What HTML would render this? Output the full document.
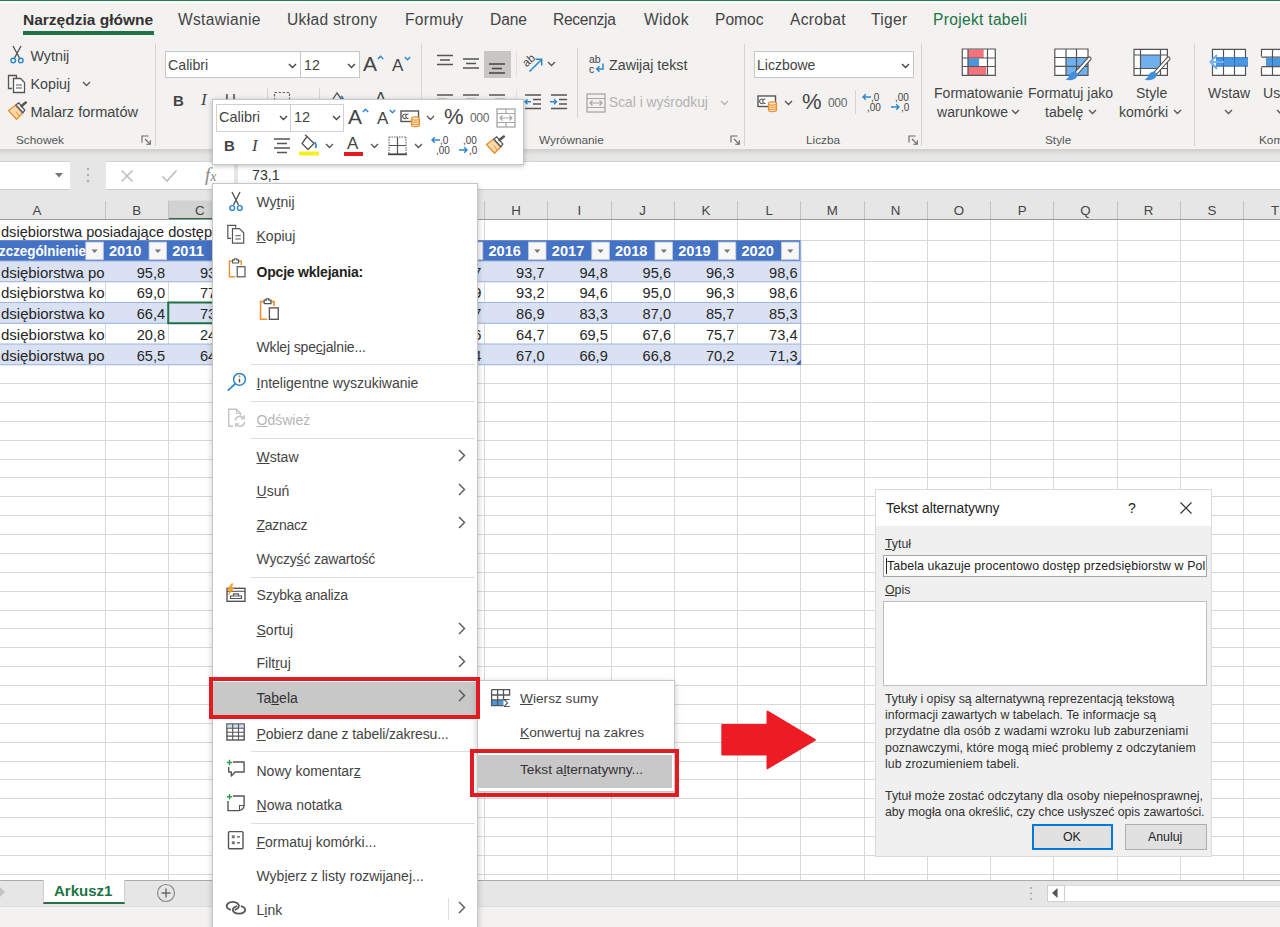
<!DOCTYPE html>
<html lang="pl">
<head>
<meta charset="utf-8">
<title>Excel – Tekst alternatywny tabeli</title>
<style>
*{box-sizing:border-box;margin:0;padding:0}
html,body{width:1280px;height:927px;overflow:hidden;background:#fff}
body{position:relative;font-family:"Liberation Sans",sans-serif;color:#444;font-size:14px}
.abs,.t{position:absolute}
.t{white-space:nowrap;line-height:1;color:#444}
svg{position:absolute;overflow:visible}
u{text-decoration:underline;text-underline-offset:1px}
/* ribbon */
#ribbon{position:absolute;left:0;top:0;width:1280px;height:149px;background:#f3f2f1}
#topline{position:absolute;left:0;top:0;width:1280px;height:4px;background:linear-gradient(#2b7a55 0,#2b7a55 1px,#f6fbf8 1px,#f8fbf9 3px,#f3f2f1 4px)}
.tab{font-size:15.6px;top:11.500px;color:#444}
.gsep{position:absolute;top:44px;width:1px;height:102px;background:#d6d4d2}
.glabel{font-size:11.800px;top:134.500px;color:#555}
.rt{font-size:14.6px}
.box{position:absolute;background:#fff;border:1px solid #c9c7c5}
.dl{font-size:12.350px;color:#333}
.dp{line-height:16.200px;white-space:nowrap;color:#333}
</style>
</head>
<body>
<div id="ribbon">
<div id="topline"></div>
<!-- tabs -->
<span class="t tab" style="left:23px;font-weight:bold;color:#333;font-size:15.5px;letter-spacing:0px">Narzędzia główne</span>
<div class="abs" style="left:23px;top:31px;width:131px;height:4px;background:#217346"></div>
<span class="t tab" style="left:178px;letter-spacing:.3px">Wstawianie</span>
<span class="t tab" style="left:287px;letter-spacing:.3px">Układ strony</span>
<span class="t tab" style="left:405px;letter-spacing:.3px">Formuły</span>
<span class="t tab" style="left:490px;letter-spacing:-.1px">Dane</span>
<span class="t tab" style="left:553px;letter-spacing:-.3px">Recenzja</span>
<span class="t tab" style="left:644px;letter-spacing:.3px">Widok</span>
<span class="t tab" style="left:715px;letter-spacing:0px">Pomoc</span>
<span class="t tab" style="left:790px;letter-spacing:.3px">Acrobat</span>
<span class="t tab" style="left:871px;letter-spacing:.3px">Tiger</span>
<span class="t tab" style="left:933px;color:#217346;letter-spacing:.3px">Projekt tabeli</span>

<!-- Schowek -->
<svg style="left:9px;top:45px" width="16" height="20" viewBox="0 0 16 20"><path d="M4 1 L10.5 13 M12 1 L5.500 13" stroke="#555" stroke-width="1.4" fill="none"/><circle cx="4.2" cy="15.500" r="2.300" fill="none" stroke="#2e86c9" stroke-width="1.4"/><circle cx="11.800" cy="15.500" r="2.300" fill="none" stroke="#2e86c9" stroke-width="1.4"/></svg>
<span class="t rt" style="left:30.500px;top:48.500px;font-size:14.300px">Wytnij</span>
<svg style="left:7px;top:74px" width="20" height="20" viewBox="0 0 20 20"><path d="M5 14.500 H1.500 V1.500 H9.500 V4" stroke="#555" stroke-width="1.300" fill="none"/><path d="M6.500 4.500 H13.500 L17.500 8.500 V18.500 H6.500 Z" fill="#fff" stroke="#555" stroke-width="1.300"/><path d="M9 11 H15 M9 14 H15" stroke="#555" stroke-width="1.100"/></svg>
<span class="t rt" style="left:30.500px;top:76.500px;font-size:14.300px">Kopiuj</span>
<svg style="left:82px;top:81px" width="9" height="6" viewBox="0 0 9 6"><path d="M1 1 L4.500 4.500 L8 1" stroke="#555" stroke-width="1.300" fill="none"/></svg>
<svg style="left:7px;top:101px" width="21" height="20" viewBox="0 0 20 20"><path d="M1 9.500 L8 4.200 L15.200 12 L9 18.200 Z" fill="#fbd9b0" stroke="#e8912d" stroke-width="1.400" stroke-linejoin="round"/><path d="M5 13.500 L9 17.500 M8.500 10.500 L11.500 15" stroke="#e8912d" stroke-width="1"/><path d="M8.300 4 L11.300 1.800 L17.300 9.200 L15.300 11.800 Z" fill="#f3f2f1" stroke="#555" stroke-width="1.300" stroke-linejoin="round"/><path d="M14 5 L18.300 1.600" stroke="#555" stroke-width="2.600" stroke-linecap="round"/></svg>
<span class="t rt" style="left:30.500px;top:104.500px;font-size:14.550px">Malarz formatów</span>
<span class="t glabel" style="left:16px">Schowek</span>
<svg style="left:141px;top:135px" width="10" height="10" viewBox="0 0 10 10"><path d="M1 7.500 V1 H7.500 M4 4 L9.300 9.300 M9.300 5.300 V9.300 H5.300" stroke="#666" stroke-width="1.100" fill="none"/></svg>
<div class="gsep" style="left:155px"></div>

<!-- Czcionka -->
<div class="box" style="left:165px;top:51px;width:136px;height:27px"></div>
<span class="t" style="left:168px;top:58px;font-size:14.200px">Calibri</span>
<svg style="left:288px;top:63px" width="9" height="6" viewBox="0 0 9 6"><path d="M1 1 L4.500 4.500 L8 1" stroke="#444" stroke-width="1.400" fill="none"/></svg>
<div class="box" style="left:300px;top:51px;width:60px;height:27px"></div>
<span class="t" style="left:304px;top:58px;font-size:14.200px">12</span>
<svg style="left:347px;top:63px" width="9" height="6" viewBox="0 0 9 6"><path d="M1 1 L4.500 4.500 L8 1" stroke="#444" stroke-width="1.400" fill="none"/></svg>
<span class="t" style="left:363px;top:53px;font-size:21px">A</span>
<svg style="left:377px;top:55px" width="7" height="5" viewBox="0 0 7 5"><path d="M.8 4 L3.500 1.200 L6.200 4" stroke="#2e86c9" stroke-width="1.400" fill="none"/></svg>
<span class="t" style="left:392px;top:57px;font-size:17px">A</span>
<svg style="left:404px;top:56px" width="7" height="5" viewBox="0 0 7 5"><path d="M.8 1 L3.500 3.800 L6.200 1" stroke="#2e86c9" stroke-width="1.400" fill="none"/></svg>
<span class="t" style="left:173px;top:93px;font-size:15px;font-weight:bold">B</span>
<span class="t" style="left:201px;top:91px;font-size:17px;font-style:italic;font-family:'Liberation Serif',serif">I</span>
<span class="t" style="left:225px;top:91px;font-size:15px"><u>U</u></span>
<div class="abs" style="left:267px;top:88px;width:1px;height:22px;background:#d6d4d2"></div>
<svg style="left:273px;top:91px" width="18" height="18" viewBox="0 0 18 18"><rect x="1.500" y="1.500" width="15" height="15" fill="none" stroke="#666" stroke-width="1.200" stroke-dasharray="2.500 1.500"/></svg>
<div class="abs" style="left:319px;top:88px;width:1px;height:22px;background:#d6d4d2"></div>
<svg style="left:328px;top:90px" width="18" height="18" viewBox="0 0 18 18"><path d="M3 12 L9 3 L14 10 Z" fill="none" stroke="#555" stroke-width="1.300"/><path d="M13 6 q3 2 2 6" stroke="#2e86c9" stroke-width="1.600" fill="none"/></svg>
<span class="t" style="left:375px;top:90px;font-size:17px">A</span>
<div class="gsep" style="left:421px"></div>
<!-- Wyrownanie -->
<svg style="left:436px;top:53px" width="18" height="18" viewBox="0 0 18 18"><path d="M1 2.500 H17 M4 7 H14 M1 11.500 H17" stroke="#555" stroke-width="1.400"/></svg>
<svg style="left:462px;top:55px" width="18" height="18" viewBox="0 0 18 18"><path d="M1 4 H17 M4 8.500 H14 M1 13 H17" stroke="#555" stroke-width="1.400"/></svg>
<div class="abs" style="left:484px;top:51px;width:27px;height:27px;background:#c8c6c4"></div>
<svg style="left:488px;top:58px" width="18" height="18" viewBox="0 0 18 18"><path d="M1 6 H17 M4 10.500 H14 M1 15 H17" stroke="#444" stroke-width="1.400"/></svg>
<svg style="left:520px;top:50px" width="26" height="26" viewBox="520 50 26 26"><text x="0" y="0" font-size="11.500" fill="#444" transform="translate(526.500 67.500) rotate(-42)" font-family="Liberation Sans, sans-serif">ab</text><path d="M529.500 71.500 L541.300 59.700 M535.500 59.300 H541.700 V65.500" stroke="#2e86c9" stroke-width="1.500" fill="none"/></svg>
<svg style="left:546.500px;top:61px" width="9" height="6" viewBox="0 0 9 6"><path d="M1 1 L4.500 4.500 L8 1" stroke="#555" stroke-width="1.300" fill="none"/></svg>
<svg style="left:436px;top:93px" width="18" height="18" viewBox="0 0 18 18"><path d="M1 2 H17 M1 6.500 H11 M1 11 H17 M1 15.500 H11" stroke="#555" stroke-width="1.400"/></svg>
<svg style="left:462px;top:93px" width="18" height="18" viewBox="0 0 18 18"><path d="M1 2 H17 M4 6.500 H14 M1 11 H17 M4 15.500 H14" stroke="#555" stroke-width="1.400"/></svg>
<svg style="left:488px;top:93px" width="18" height="18" viewBox="0 0 18 18"><path d="M1 2 H17 M7 6.500 H17 M1 11 H17 M7 15.500 H17" stroke="#555" stroke-width="1.400"/></svg>
<svg style="left:524px;top:93px" width="18" height="18" viewBox="0 0 18 18"><path d="M1 2 H17 M9 6.500 H17 M9 11 H17 M1 15.500 H17" stroke="#555" stroke-width="1.400"/><path d="M7 8.800 H1 M3.500 6.300 L1 8.800 L3.500 11.300" stroke="#2e86c9" stroke-width="1.400" fill="none"/></svg>
<svg style="left:550px;top:93px" width="18" height="18" viewBox="0 0 18 18"><path d="M1 2 H17 M9 6.500 H17 M9 11 H17 M1 15.500 H17" stroke="#555" stroke-width="1.400"/><path d="M0 8.800 H6.500 M4 6.300 L6.500 8.800 L4 11.300" stroke="#2e86c9" stroke-width="1.400" fill="none"/></svg>
<div class="abs" style="left:516px;top:52px;width:1px;height:25px;background:#e3e1df"></div>
<div class="abs" style="left:516px;top:90px;width:1px;height:25px;background:#e3e1df"></div>
<div class="abs" style="left:577px;top:48px;width:1px;height:70px;background:#d6d4d2"></div>
<svg style="left:588px;top:54px" width="20" height="22" viewBox="0 0 20 22"><text x="1" y="9" font-size="10.500" fill="#444" font-family="Liberation Sans, sans-serif">ab</text><text x="1" y="19" font-size="10.500" fill="#444" font-family="Liberation Sans, sans-serif">c</text><path d="M15 9.500 V15 H9 M11.500 12.300 L8.800 15 L11.500 17.700" stroke="#2e86c9" stroke-width="1.500" fill="none"/></svg>
<span class="t rt" style="left:609px;top:58px;font-size:14.250px">Zawijaj tekst</span>
<svg style="left:586px;top:93px" width="20" height="20" viewBox="0 0 20 20"><rect x="1" y="1" width="18" height="18" fill="none" stroke="#a8a6a4" stroke-width="1.300"/><path d="M1 5.500 H19 M1 14.500 H19 M4 10 H16 M6.500 7.500 L4 10 L6.500 12.500 M13.500 7.500 L16 10 L13.500 12.500" stroke="#a8a6a4" stroke-width="1.200" fill="none"/></svg>
<span class="t rt" style="left:609px;top:96px;color:#b3b1af;font-size:13.800px">Scal i wyśrodkuj</span>
<svg style="left:720px;top:100px" width="9" height="6" viewBox="0 0 9 6"><path d="M1 1 L4.500 4.500 L8 1" stroke="#b3b1af" stroke-width="1.300" fill="none"/></svg>
<span class="t glabel" style="left:539px">Wyrównanie</span>
<svg style="left:730px;top:135px" width="10" height="10" viewBox="0 0 10 10"><path d="M1 7.500 V1 H7.500 M4 4 L9.300 9.300 M9.300 5.300 V9.300 H5.300" stroke="#666" stroke-width="1.100" fill="none"/></svg>
<div class="gsep" style="left:744px"></div>

<!-- Liczba -->
<div class="box" style="left:754px;top:51px;width:160px;height:27px"></div>
<span class="t" style="left:757px;top:58px;font-size:14px">Liczbowe</span>
<svg style="left:901px;top:63px" width="9" height="6" viewBox="0 0 9 6"><path d="M1 1 L4.500 4.500 L8 1" stroke="#444" stroke-width="1.400" fill="none"/></svg>
<svg style="left:757px;top:93px" width="22" height="20" viewBox="0 0 22 20"><rect x="1" y="3" width="17.500" height="10.500" fill="#fff" stroke="#555" stroke-width="1.400"/><path d="M8.500 6 a2.300 2.300 0 1 0 0 4.500 M5.800 6.200 a2.300 2.300 0 1 0 0 4.200" fill="none" stroke="#555" stroke-width="1.100"/><path d="M11.500 10.500 v6.500 a4 1.600 0 0 0 8 0 v-6.500" fill="#fde9cf" stroke="#e8912d" stroke-width="1.200"/><ellipse cx="15.500" cy="10.500" rx="4" ry="1.600" fill="#fde9cf" stroke="#e8912d" stroke-width="1.200"/><path d="M11.500 12.700 a4 1.600 0 0 0 8 0 M11.500 14.900 a4 1.600 0 0 0 8 0" fill="none" stroke="#e8912d" stroke-width="1.100"/></svg>
<svg style="left:784px;top:100px" width="9" height="6" viewBox="0 0 9 6"><path d="M1 1 L4.500 4.500 L8 1" stroke="#555" stroke-width="1.300" fill="none"/></svg>
<span class="t" style="left:802px;top:91px;font-size:22px">%</span>
<span class="t" style="left:828px;top:97px;font-size:12px;letter-spacing:-.3px;color:#666">000</span>
<div class="abs" style="left:855px;top:90px;width:1px;height:24px;background:#d6d4d2"></div>
<svg style="left:861px;top:92px" width="24" height="22" viewBox="0 0 24 22"><text x="10" y="9" font-size="10" fill="#444" font-family="Liberation Sans, sans-serif">,0</text><text x="6" y="19" font-size="10" fill="#444" font-family="Liberation Sans, sans-serif">,00</text><path d="M10 5 H2 M4.800 2.200 L2 5 L4.800 7.800" stroke="#2e86c9" stroke-width="1.400" fill="none"/></svg>
<svg style="left:889px;top:92px" width="24" height="22" viewBox="0 0 24 22"><text x="6" y="9" font-size="10" fill="#444" font-family="Liberation Sans, sans-serif">,00</text><text x="12" y="19" font-size="10" fill="#444" font-family="Liberation Sans, sans-serif">,0</text><path d="M2 15 H10 M7.200 12.200 L10 15 L7.200 17.800" stroke="#2e86c9" stroke-width="1.400" fill="none"/></svg>
<span class="t glabel" style="left:806px">Liczba</span>
<svg style="left:908px;top:135px" width="10" height="10" viewBox="0 0 10 10"><path d="M1 7.500 V1 H7.500 M4 4 L9.300 9.300 M9.300 5.300 V9.300 H5.300" stroke="#666" stroke-width="1.100" fill="none"/></svg>
<div class="gsep" style="left:921px"></div>

<!-- Style -->
<svg style="left:960px;top:46px" width="40" height="34" viewBox="960 46 40 34"><rect x="962.300" y="49" width="33" height="26.300" fill="#fff"/><rect x="968" y="49.500" width="15.700" height="8.500" fill="#f4727c"/><rect x="968" y="58.500" width="11" height="8" fill="#4a97e0"/><rect x="968" y="66.500" width="18.200" height="8.500" fill="#f4727c"/><path d="M962.300 49 H995.300 V75.300 H962.300 Z M962.300 58 H995.300 M962.300 66.500 H995.300 M968 49 V75.300 M987.500 49 V75.300" fill="none" stroke="#555" stroke-width="1.200"/></svg>
<span class="t rt" style="left:934px;top:86px;font-size:14.050px">Formatowanie</span>
<span class="t rt" style="left:937px;top:105px;font-size:14.050px">warunkowe</span>
<svg style="left:1011px;top:109px" width="9" height="6" viewBox="0 0 9 6"><path d="M1 1 L4.500 4.500 L8 1" stroke="#555" stroke-width="1.300" fill="none"/></svg>
<svg style="left:1052px;top:46px" width="42" height="38" viewBox="1052 46 42 38"><rect x="1054.800" y="49" width="33.200" height="26.300" fill="#fff"/><rect x="1066" y="57.500" width="22" height="18.500" fill="#6fb0ee"/><path d="M1054.800 49 H1088 V75.300 H1054.800 Z M1054.800 57.500 H1088 M1054.800 66.300 H1088 M1066 49 V75.300 M1076.500 49 V75.300" fill="none" stroke="#555" stroke-width="1.200"/><path d="M1089.500 58.500 L1076 73.500" stroke="#555" stroke-width="4.200" stroke-linecap="round"/><path d="M1089.500 58.500 L1076.500 73" stroke="#fff" stroke-width="2" stroke-linecap="round"/><path d="M1075 71.500 q-4.500 .5 -5.500 4 q-.8 2.500 -4 4 q6 2 10 -1 q3 -2.500 2.500 -5 z" fill="#3f8fdc"/></svg>
<span class="t rt" style="left:1028px;top:86px;font-size:14.050px">Formatuj jako</span>
<span class="t rt" style="left:1045px;top:105px;font-size:14.050px">tabelę</span>
<svg style="left:1088px;top:109px" width="9" height="6" viewBox="0 0 9 6"><path d="M1 1 L4.500 4.500 L8 1" stroke="#555" stroke-width="1.300" fill="none"/></svg>
<svg style="left:1131px;top:46px" width="42" height="38" viewBox="1131 46 42 38"><rect x="1134" y="49.300" width="33.400" height="26" fill="#fff"/><rect x="1140.500" y="55" width="20" height="13.500" fill="#6fb0ee"/><path d="M1134 49.300 H1167.400 V75.300 H1134 Z M1134 55 H1167.400 M1134 68.500 H1167.400 M1140.500 49.300 V75.300 M1160.500 49.300 V75.300" fill="none" stroke="#555" stroke-width="1.200"/><path d="M1168.500 58.500 L1155 73.500" stroke="#555" stroke-width="4.200" stroke-linecap="round"/><path d="M1168.500 58.500 L1155.500 73" stroke="#fff" stroke-width="2" stroke-linecap="round"/><path d="M1154 71.500 q-4.500 .5 -5.500 4 q-.8 2.500 -4 4 q6 2 10 -1 q3 -2.500 2.500 -5 z" fill="#3f8fdc"/></svg>
<span class="t rt" style="left:1136px;top:86px;font-size:14.050px">Style</span>
<span class="t rt" style="left:1119px;top:105px;font-size:14.050px">komórki</span>
<svg style="left:1173px;top:109px" width="9" height="6" viewBox="0 0 9 6"><path d="M1 1 L4.500 4.500 L8 1" stroke="#555" stroke-width="1.300" fill="none"/></svg>
<span class="t glabel" style="left:1045px">Style</span>
<div class="gsep" style="left:1194px"></div>

<!-- Komorki -->
<svg style="left:1206px;top:46px" width="46" height="34" viewBox="1206 46 46 34"><rect x="1212.500" y="49.300" width="33" height="26" fill="#fff"/><path d="M1212.500 49.300 H1245.500 V75.300 H1212.500 Z M1223.500 49.300 V75.300 M1234.500 49.300 V75.300" fill="none" stroke="#555" stroke-width="1.200"/><rect x="1216" y="58" width="32" height="8" fill="#4a97e0"/><path d="M1212.500 57.700 H1248 M1212.500 66.200 H1248" stroke="#2a6fb5" stroke-width="1"/><path d="M1223.500 58 V66 M1234.500 58 V66" stroke="#2a6fb5" stroke-width="1"/><path d="M1224 62 H1211 M1217 55 L1210.500 62 L1217 69" stroke="#6fb0ee" stroke-width="2" fill="none"/></svg>
<span class="t rt" style="left:1208px;top:86px;font-size:14.050px">Wstaw</span>
<svg style="left:1224px;top:109px" width="9" height="6" viewBox="0 0 9 6"><path d="M1 1 L4.500 4.500 L8 1" stroke="#555" stroke-width="1.300" fill="none"/></svg>
<svg style="left:1258px;top:46px" width="30" height="34" viewBox="1258 46 30 34"><rect x="1261.500" y="49.300" width="33" height="26" fill="#fff"/><path d="M1261.500 49.300 H1294.500 V75.300 H1261.500 Z M1272.500 49.300 V75.300" fill="none" stroke="#555" stroke-width="1.200"/><rect x="1258" y="56.500" width="8" height="11" fill="#f3f2f1"/><rect x="1266" y="58" width="20" height="8" fill="#4a97e0"/><path d="M1261.500 57.200 H1290 M1261.500 66.700 H1290" stroke="#555" stroke-width="1.200"/><path d="M1272.500 58 V66" stroke="#2a6fb5" stroke-width="1"/></svg>
<span class="t rt" style="left:1263px;top:86px;font-size:14.050px">Usuń</span>
<svg style="left:1276px;top:109px" width="9" height="6" viewBox="0 0 9 6"><path d="M1 1 L4.500 4.500 L8 1" stroke="#555" stroke-width="1.300" fill="none"/></svg>
<span class="t glabel" style="left:1259px">Komórki</span>
</div>
<!-- formula bar area -->
<div class="abs" style="left:0;top:149px;width:1280px;height:71px;background:#e6e6e6"></div>
<div class="abs" style="left:0;top:149px;width:1280px;height:6px;background:linear-gradient(#d0cfce,#e6e6e6)"></div>
<div class="abs" style="left:0;top:161px;width:70px;height:29px;background:#fff;border-top:1px solid #d4d4d4;border-bottom:1px solid #cacaca"></div>
<svg style="left:55px;top:173px" width="9" height="5" viewBox="0 0 9 5"><path d="M0 0 H8 L4 4.500 Z" fill="#777"/></svg>
<svg style="left:86px;top:167px" width="4" height="16" viewBox="0 0 4 16"><circle cx="2" cy="2" r="1.200" fill="#aaa"/><circle cx="2" cy="8" r="1.200" fill="#aaa"/><circle cx="2" cy="14" r="1.200" fill="#aaa"/></svg>
<div class="abs" style="left:106px;top:161px;width:128px;height:29px;background:#fff;border-top:1px solid #d4d4d4;border-bottom:1px solid #cacaca"></div>
<div class="abs" style="left:238px;top:161px;width:1042px;height:29px;background:#fff;border-top:1px solid #d4d4d4;border-bottom:1px solid #cacaca"></div>
<svg style="left:120px;top:169px" width="14" height="14" viewBox="0 0 14 14"><path d="M1.500 1.500 L12.500 12.500 M12.500 1.500 L1.500 12.500" stroke="#bdbdbd" stroke-width="1.500"/></svg>
<svg style="left:161px;top:169px" width="17" height="14" viewBox="0 0 17 14"><path d="M1.500 7.500 L6 12 L15.500 1.500" stroke="#bdbdbd" stroke-width="1.600" fill="none"/></svg>
<span class="t" style="left:205px;top:165px;font-size:19px;font-style:italic;font-family:'Liberation Serif',serif;color:#888">f<span style="font-size:14px">x</span></span>
<span class="t" style="left:252px;top:168px;font-size:14.200px;color:#333">73,1</span>
<!-- grid -->
<svg style="left:0;top:196px" width="1280" height="686" viewBox="0 196 1280 686" font-family="Liberation Sans, sans-serif">
<rect x="168.25" y="200.5" width="63.25" height="19" fill="#d2d2d2"/>
<rect x="168.25" y="218" width="63.25" height="2" fill="#217346"/>
<path d="M105.50 201 V219.500 M168.50 201 V219.500 M231.50 201 V219.500 M294.50 201 V219.500 M358.50 201 V219.500 M421.50 201 V219.500 M484.50 201 V219.500 M547.50 201 V219.500 M611.50 201 V219.500 M674.50 201 V219.500 M737.50 201 V219.500 M800.50 201 V219.500 M864.50 201 V219.500 M927.50 201 V219.500 M990.50 201 V219.500 M1053.50 201 V219.500 M1117.50 201 V219.500 M1180.50 201 V219.500 M1243.50 201 V219.500 M1306.50 201 V219.500" stroke="#c2c2c2" stroke-width="1" fill="none"/>
<path d="M0 219.500 H1280" stroke="#999" stroke-width="1"/>
<path d="M105.50 240.25 V880 M168.50 240.25 V880 M231.50 240.25 V880 M294.50 220.00 V880 M358.50 220.00 V880 M421.50 220.00 V880 M484.50 220.00 V880 M547.50 220.00 V880 M611.50 220.00 V880 M674.50 220.00 V880 M737.50 220.00 V880 M800.50 220.00 V880 M864.50 220.00 V880 M927.50 220.00 V880 M990.50 220.00 V880 M1053.50 220.00 V880 M1117.50 220.00 V880 M1180.50 220.00 V880 M1243.50 220.00 V880 M1306.50 220.00 V880 M0 240.50 H1280 M0 261.50 H1280 M0 281.50 H1280 M0 302.50 H1280 M0 323.50 H1280 M0 344.50 H1280 M0 364.50 H1280 M0 383.50 H1280 M0 402.50 H1280 M0 421.50 H1280 M0 440.50 H1280 M0 459.50 H1280 M0 477.50 H1280 M0 496.50 H1280 M0 515.50 H1280 M0 534.50 H1280 M0 553.50 H1280 M0 572.50 H1280 M0 591.50 H1280 M0 610.50 H1280 M0 628.50 H1280 M0 647.50 H1280 M0 666.50 H1280 M0 685.50 H1280 M0 704.50 H1280 M0 723.50 H1280 M0 742.50 H1280 M0 761.50 H1280 M0 779.50 H1280 M0 798.50 H1280 M0 817.50 H1280 M0 836.50 H1280 M0 855.50 H1280 M0 874.50 H1280" stroke="#d8d8d8" stroke-width="1" fill="none"/>
<rect x="0" y="240.25" width="800.75" height="20.75" fill="#4472c4"/>
<rect x="0" y="261.50" width="800.75" height="20.25" fill="#d9e1f2"/>
<rect x="0" y="303.00" width="800.75" height="20.25" fill="#d9e1f2"/>
<rect x="0" y="344.50" width="800.75" height="20.25" fill="#d9e1f2"/>
<path d="M0 261.00 H800.75 M0 281.75 H800.75 M0 302.50 H800.75 M0 323.25 H800.75 M0 344.00 H800.75 M0 364.75 H800.75 M800.75 240.25 V364.75" stroke="#9db5e0" stroke-width="1" fill="none"/>
<text x="37.0" y="215.400" font-size="13.300" fill="#444" text-anchor="middle">A</text>
<text x="136.6" y="215.400" font-size="13.300" fill="#444" text-anchor="middle">B</text>
<text x="199.9" y="215.400" font-size="13.300" fill="#444" text-anchor="middle">C</text>
<text x="263.1" y="215.400" font-size="13.300" fill="#444" text-anchor="middle">D</text>
<text x="326.4" y="215.400" font-size="13.300" fill="#444" text-anchor="middle">E</text>
<text x="389.6" y="215.400" font-size="13.300" fill="#444" text-anchor="middle">F</text>
<text x="452.9" y="215.400" font-size="13.300" fill="#444" text-anchor="middle">G</text>
<text x="516.1" y="215.400" font-size="13.300" fill="#444" text-anchor="middle">H</text>
<text x="579.4" y="215.400" font-size="13.300" fill="#444" text-anchor="middle">I</text>
<text x="642.6" y="215.400" font-size="13.300" fill="#444" text-anchor="middle">J</text>
<text x="705.9" y="215.400" font-size="13.300" fill="#444" text-anchor="middle">K</text>
<text x="769.1" y="215.400" font-size="13.300" fill="#444" text-anchor="middle">L</text>
<text x="832.4" y="215.400" font-size="13.300" fill="#444" text-anchor="middle">M</text>
<text x="895.6" y="215.400" font-size="13.300" fill="#444" text-anchor="middle">N</text>
<text x="958.9" y="215.400" font-size="13.300" fill="#444" text-anchor="middle">O</text>
<text x="1022.1" y="215.400" font-size="13.300" fill="#444" text-anchor="middle">P</text>
<text x="1085.4" y="215.400" font-size="13.300" fill="#444" text-anchor="middle">Q</text>
<text x="1148.6" y="215.400" font-size="13.300" fill="#444" text-anchor="middle">R</text>
<text x="1211.9" y="215.400" font-size="13.300" fill="#444" text-anchor="middle">S</text>
<text x="1275.1" y="215.400" font-size="13.300" fill="#444" text-anchor="middle">T</text>
<text x="1" y="236.5" font-size="14.600" fill="#262626" textLength="211" lengthAdjust="spacingAndGlyphs">dsiębiorstwa posiadające dostęp</text>
<text x="-1" y="256.2" font-size="14.600" font-weight="bold" fill="#fff" textLength="87" lengthAdjust="spacingAndGlyphs">zczególnienie</text>
<rect x="85.8" y="242.1" width="17.500" height="17.500" fill="#f7f7f7" stroke="#c5cede" stroke-width=".8"/><path d="M91.5 249.4 h6.200 l-3.100 3.600 z" fill="#777"/>
<text x="109.0" y="256.2" font-size="14.600" font-weight="bold" fill="#fff">2010</text>
<rect x="149.1" y="242.1" width="17.500" height="17.500" fill="#f7f7f7" stroke="#c5cede" stroke-width=".8"/><path d="M154.8 249.4 h6.200 l-3.100 3.600 z" fill="#777"/>
<text x="172.2" y="256.2" font-size="14.600" font-weight="bold" fill="#fff">2011</text>
<rect x="212.3" y="242.1" width="17.500" height="17.500" fill="#f7f7f7" stroke="#c5cede" stroke-width=".8"/><path d="M218.0 249.4 h6.200 l-3.100 3.600 z" fill="#777"/>
<text x="235.5" y="256.2" font-size="14.600" font-weight="bold" fill="#fff">2012</text>
<rect x="275.6" y="242.1" width="17.500" height="17.500" fill="#f7f7f7" stroke="#c5cede" stroke-width=".8"/><path d="M281.2 249.4 h6.200 l-3.100 3.600 z" fill="#777"/>
<text x="298.8" y="256.2" font-size="14.600" font-weight="bold" fill="#fff">2013</text>
<rect x="338.8" y="242.1" width="17.500" height="17.500" fill="#f7f7f7" stroke="#c5cede" stroke-width=".8"/><path d="M344.5 249.4 h6.200 l-3.100 3.600 z" fill="#777"/>
<text x="362.0" y="256.2" font-size="14.600" font-weight="bold" fill="#fff">2014</text>
<rect x="402.1" y="242.1" width="17.500" height="17.500" fill="#f7f7f7" stroke="#c5cede" stroke-width=".8"/><path d="M407.8 249.4 h6.200 l-3.100 3.600 z" fill="#777"/>
<text x="425.2" y="256.2" font-size="14.600" font-weight="bold" fill="#fff">2015</text>
<rect x="465.3" y="242.1" width="17.500" height="17.500" fill="#f7f7f7" stroke="#c5cede" stroke-width=".8"/><path d="M471.0 249.4 h6.200 l-3.100 3.600 z" fill="#777"/>
<text x="488.5" y="256.2" font-size="14.600" font-weight="bold" fill="#fff">2016</text>
<rect x="528.5" y="242.1" width="17.500" height="17.500" fill="#f7f7f7" stroke="#c5cede" stroke-width=".8"/><path d="M534.2 249.4 h6.200 l-3.100 3.600 z" fill="#777"/>
<text x="551.8" y="256.2" font-size="14.600" font-weight="bold" fill="#fff">2017</text>
<rect x="591.8" y="242.1" width="17.500" height="17.500" fill="#f7f7f7" stroke="#c5cede" stroke-width=".8"/><path d="M597.5 249.4 h6.200 l-3.100 3.600 z" fill="#777"/>
<text x="615.0" y="256.2" font-size="14.600" font-weight="bold" fill="#fff">2018</text>
<rect x="655.0" y="242.1" width="17.500" height="17.500" fill="#f7f7f7" stroke="#c5cede" stroke-width=".8"/><path d="M660.8 249.4 h6.200 l-3.100 3.600 z" fill="#777"/>
<text x="678.2" y="256.2" font-size="14.600" font-weight="bold" fill="#fff">2019</text>
<rect x="718.3" y="242.1" width="17.500" height="17.500" fill="#f7f7f7" stroke="#c5cede" stroke-width=".8"/><path d="M724.0 249.4 h6.200 l-3.100 3.600 z" fill="#777"/>
<text x="741.5" y="256.2" font-size="14.600" font-weight="bold" fill="#fff">2020</text>
<rect x="781.5" y="242.1" width="17.500" height="17.500" fill="#f7f7f7" stroke="#c5cede" stroke-width=".8"/><path d="M787.2 249.4 h6.200 l-3.100 3.600 z" fill="#777"/>
<text x="1" y="277.5" font-size="14.600" fill="#262626" textLength="103.500" lengthAdjust="spacingAndGlyphs">dsiębiorstwa po</text>
<text x="165.1" y="277.5" font-size="14.600" fill="#262626" text-anchor="end">95,8</text>
<text x="228.3" y="277.5" font-size="14.600" fill="#262626" text-anchor="end">93,4</text>
<text x="291.6" y="277.5" font-size="14.600" fill="#262626" text-anchor="end">93,5</text>
<text x="354.8" y="277.5" font-size="14.600" fill="#262626" text-anchor="end">93,6</text>
<text x="418.1" y="277.5" font-size="14.600" fill="#262626" text-anchor="end">93,1</text>
<text x="481.3" y="277.5" font-size="14.600" fill="#262626" text-anchor="end">92,7</text>
<text x="544.5" y="277.5" font-size="14.600" fill="#262626" text-anchor="end">93,7</text>
<text x="607.8" y="277.5" font-size="14.600" fill="#262626" text-anchor="end">94,8</text>
<text x="671.0" y="277.5" font-size="14.600" fill="#262626" text-anchor="end">95,6</text>
<text x="734.3" y="277.5" font-size="14.600" fill="#262626" text-anchor="end">96,3</text>
<text x="797.5" y="277.5" font-size="14.600" fill="#262626" text-anchor="end">98,6</text>
<text x="1" y="298.2" font-size="14.600" fill="#262626" textLength="103.500" lengthAdjust="spacingAndGlyphs">dsiębiorstwa ko</text>
<text x="165.1" y="298.2" font-size="14.600" fill="#262626" text-anchor="end">69,0</text>
<text x="228.3" y="298.2" font-size="14.600" fill="#262626" text-anchor="end">77,5</text>
<text x="291.6" y="298.2" font-size="14.600" fill="#262626" text-anchor="end">82,1</text>
<text x="354.8" y="298.2" font-size="14.600" fill="#262626" text-anchor="end">82,6</text>
<text x="418.1" y="298.2" font-size="14.600" fill="#262626" text-anchor="end">90,4</text>
<text x="481.3" y="298.2" font-size="14.600" fill="#262626" text-anchor="end">91,9</text>
<text x="544.5" y="298.2" font-size="14.600" fill="#262626" text-anchor="end">93,2</text>
<text x="607.8" y="298.2" font-size="14.600" fill="#262626" text-anchor="end">94,6</text>
<text x="671.0" y="298.2" font-size="14.600" fill="#262626" text-anchor="end">95,0</text>
<text x="734.3" y="298.2" font-size="14.600" fill="#262626" text-anchor="end">96,3</text>
<text x="797.5" y="298.2" font-size="14.600" fill="#262626" text-anchor="end">98,6</text>
<text x="1" y="319.0" font-size="14.600" fill="#262626" textLength="103.500" lengthAdjust="spacingAndGlyphs">dsiębiorstwa ko</text>
<text x="165.1" y="319.0" font-size="14.600" fill="#262626" text-anchor="end">66,4</text>
<text x="228.3" y="319.0" font-size="14.600" fill="#262626" text-anchor="end">73,1</text>
<text x="291.6" y="319.0" font-size="14.600" fill="#262626" text-anchor="end">76,8</text>
<text x="354.8" y="319.0" font-size="14.600" fill="#262626" text-anchor="end">79,2</text>
<text x="418.1" y="319.0" font-size="14.600" fill="#262626" text-anchor="end">85,0</text>
<text x="481.3" y="319.0" font-size="14.600" fill="#262626" text-anchor="end">86,7</text>
<text x="544.5" y="319.0" font-size="14.600" fill="#262626" text-anchor="end">86,9</text>
<text x="607.8" y="319.0" font-size="14.600" fill="#262626" text-anchor="end">83,3</text>
<text x="671.0" y="319.0" font-size="14.600" fill="#262626" text-anchor="end">87,0</text>
<text x="734.3" y="319.0" font-size="14.600" fill="#262626" text-anchor="end">85,7</text>
<text x="797.5" y="319.0" font-size="14.600" fill="#262626" text-anchor="end">85,3</text>
<text x="1" y="339.8" font-size="14.600" fill="#262626" textLength="103.500" lengthAdjust="spacingAndGlyphs">dsiębiorstwa ko</text>
<text x="165.1" y="339.8" font-size="14.600" fill="#262626" text-anchor="end">20,8</text>
<text x="228.3" y="339.8" font-size="14.600" fill="#262626" text-anchor="end">24,0</text>
<text x="291.6" y="339.8" font-size="14.600" fill="#262626" text-anchor="end">30,1</text>
<text x="354.8" y="339.8" font-size="14.600" fill="#262626" text-anchor="end">38,5</text>
<text x="418.1" y="339.8" font-size="14.600" fill="#262626" text-anchor="end">50,2</text>
<text x="481.3" y="339.8" font-size="14.600" fill="#262626" text-anchor="end">61,6</text>
<text x="544.5" y="339.8" font-size="14.600" fill="#262626" text-anchor="end">64,7</text>
<text x="607.8" y="339.8" font-size="14.600" fill="#262626" text-anchor="end">69,5</text>
<text x="671.0" y="339.8" font-size="14.600" fill="#262626" text-anchor="end">67,6</text>
<text x="734.3" y="339.8" font-size="14.600" fill="#262626" text-anchor="end">75,7</text>
<text x="797.5" y="339.8" font-size="14.600" fill="#262626" text-anchor="end">73,4</text>
<text x="1" y="360.5" font-size="14.600" fill="#262626" textLength="103.500" lengthAdjust="spacingAndGlyphs">dsiębiorstwa po</text>
<text x="165.1" y="360.5" font-size="14.600" fill="#262626" text-anchor="end">65,5</text>
<text x="228.3" y="360.5" font-size="14.600" fill="#262626" text-anchor="end">64,7</text>
<text x="291.6" y="360.5" font-size="14.600" fill="#262626" text-anchor="end">67,6</text>
<text x="354.8" y="360.5" font-size="14.600" fill="#262626" text-anchor="end">66,0</text>
<text x="418.1" y="360.5" font-size="14.600" fill="#262626" text-anchor="end">65,3</text>
<text x="481.3" y="360.5" font-size="14.600" fill="#262626" text-anchor="end">65,4</text>
<text x="544.5" y="360.5" font-size="14.600" fill="#262626" text-anchor="end">67,0</text>
<text x="607.8" y="360.5" font-size="14.600" fill="#262626" text-anchor="end">66,9</text>
<text x="671.0" y="360.5" font-size="14.600" fill="#262626" text-anchor="end">66,8</text>
<text x="734.3" y="360.5" font-size="14.600" fill="#262626" text-anchor="end">70,2</text>
<text x="797.5" y="360.5" font-size="14.600" fill="#262626" text-anchor="end">71,3</text>
<rect x="168.25" y="302.50" width="63.25" height="20.75" fill="none" stroke="#217346" stroke-width="2"/>
<path d="M800.8 359.8 V364.8 H795.8 Z" fill="#3a5fa8"/>
</svg>
<!-- sheet tab bar + status bar -->
<div class="abs" style="left:0;top:880px;width:1280px;height:27px;background:#e6e6e6;border-top:1px solid #ababab"></div>
<div class="abs" style="left:0;top:906px;width:1280px;height:21px;background:#f3f2f1;border-top:1px solid #dcdcdc"></div>
<svg style="left:0;top:886px" width="6" height="12" viewBox="0 0 6 12"><path d="M0 1 L5 6 L0 11 Z" fill="#c4c4c4"/></svg>
<div class="abs" style="left:43px;top:880px;width:82px;height:24px;background:#fff;border-bottom:2px solid #217346;border-left:1px solid #cfcfcf;border-right:1px solid #cfcfcf"></div>
<span class="t" style="left:54px;top:883px;font-size:15px;font-weight:bold;color:#217346">Arkusz1</span>
<svg style="left:156px;top:883px" width="20" height="20" viewBox="0 0 20 20"><circle cx="10" cy="10" r="8.500" fill="none" stroke="#8a8a8a" stroke-width="1.200"/><path d="M10 5.500 V14.500 M5.500 10 H14.500" stroke="#6a6a6a" stroke-width="1.400"/></svg>
<svg style="left:1029px;top:886px" width="4" height="16" viewBox="0 0 4 16"><circle cx="2" cy="2" r="1.100" fill="#aaa"/><circle cx="2" cy="7.500" r="1.100" fill="#aaa"/><circle cx="2" cy="13" r="1.100" fill="#aaa"/></svg>
<div class="abs" style="left:1047px;top:885px;width:18px;height:17px;background:#fff;border:1px solid #cfcfcf"></div>
<svg style="left:1052px;top:888px" width="6" height="10" viewBox="0 0 6 10"><path d="M5.500 0 V10 L0 5 Z" fill="#555"/></svg>
<div class="abs" style="left:1065px;top:885px;width:215px;height:17px;background:#fff;border-top:1px solid #dcdcdc;border-bottom:1px solid #dcdcdc"></div>
<!-- context menu -->
<div class="abs" style="left:212px;top:183px;width:266px;height:760px;background:#fff;border:1px solid #c6c6c6;box-shadow:0 2px 6px rgba(0,0,0,.22)"></div>
<div class="abs" style="left:213px;top:682px;width:264px;height:34px;background:#c8c8c8"></div>
<span class="t" style="left:256.500px;top:195px;font-size:14px;color:#444">Wy<u>t</u>nij</span>
<span class="t" style="left:256.500px;top:229px;font-size:14px;color:#444"><u>K</u>opiuj</span>
<span class="t" style="left:256.500px;top:265px;font-size:14px;color:#222;font-weight:bold;letter-spacing:-.2px">Opcje wklejania:</span>
<span class="t" style="left:256.500px;top:340px;font-size:14px;color:#444;letter-spacing:-.15px">Wklej spe<u>c</u>jalnie...</span>
<div class="abs" style="left:251px;top:364px;width:224px;height:1px;background:#e1dfdd"></div>
<span class="t" style="left:256.500px;top:376px;font-size:14px;color:#444"><u>I</u>nteligentne wyszukiwanie</span>
<div class="abs" style="left:251px;top:401px;width:224px;height:1px;background:#e1dfdd"></div>
<span class="t" style="left:256.500px;top:413px;font-size:14px;color:#b5b5b5"><u>O</u>dśwież</span>
<div class="abs" style="left:251px;top:438px;width:224px;height:1px;background:#e1dfdd"></div>
<span class="t" style="left:256.500px;top:450px;font-size:14px;color:#444"><u>W</u>staw</span>
<svg style="left:458px;top:449px" width="8" height="13" viewBox="0 0 8 13"><path d="M1 1 L6.500 6.500 L1 12" stroke="#555" stroke-width="1.400" fill="none"/></svg>
<span class="t" style="left:256.500px;top:484px;font-size:14px;color:#444"><u>U</u>suń</span>
<svg style="left:458px;top:483px" width="8" height="13" viewBox="0 0 8 13"><path d="M1 1 L6.500 6.500 L1 12" stroke="#555" stroke-width="1.400" fill="none"/></svg>
<span class="t" style="left:256.500px;top:518px;font-size:14px;color:#444;letter-spacing:-.3px"><u>Z</u>aznacz</span>
<svg style="left:458px;top:516px" width="8" height="13" viewBox="0 0 8 13"><path d="M1 1 L6.500 6.500 L1 12" stroke="#555" stroke-width="1.400" fill="none"/></svg>
<span class="t" style="left:256.500px;top:552px;font-size:14px;color:#444;letter-spacing:-.2px">Wyczy<u>ś</u>ć zawartość</span>
<div class="abs" style="left:251px;top:577px;width:224px;height:1px;background:#e1dfdd"></div>
<span class="t" style="left:256.500px;top:588px;font-size:14px;color:#444;letter-spacing:-.2px">Szybk<u>a</u> analiza</span>
<span class="t" style="left:256.500px;top:623px;font-size:14px;color:#444"><u>S</u>ortuj</span>
<svg style="left:458px;top:622px" width="8" height="13" viewBox="0 0 8 13"><path d="M1 1 L6.500 6.500 L1 12" stroke="#555" stroke-width="1.400" fill="none"/></svg>
<span class="t" style="left:256.500px;top:656px;font-size:14px;color:#444">Filt<u>r</u>uj</span>
<svg style="left:458px;top:655px" width="8" height="13" viewBox="0 0 8 13"><path d="M1 1 L6.500 6.500 L1 12" stroke="#555" stroke-width="1.400" fill="none"/></svg>
<span class="t" style="left:256.500px;top:691px;font-size:14px;color:#333">Ta<u>b</u>ela</span>
<svg style="left:458px;top:689px" width="8" height="13" viewBox="0 0 8 13"><path d="M1 1 L6.500 6.500 L1 12" stroke="#555" stroke-width="1.400" fill="none"/></svg>
<span class="t" style="left:256.500px;top:727px;font-size:14px;color:#444;letter-spacing:-.1px"><u>P</u>obierz dane z tabeli/zakresu...</span>
<div class="abs" style="left:251px;top:751px;width:224px;height:1px;background:#e1dfdd"></div>
<span class="t" style="left:256.500px;top:764px;font-size:14px;color:#444">Nowy komentar<u>z</u></span>
<span class="t" style="left:256.500px;top:798px;font-size:14px;color:#444"><u>N</u>owa notatka</span>
<div class="abs" style="left:251px;top:823px;width:224px;height:1px;background:#e1dfdd"></div>
<span class="t" style="left:256.500px;top:835px;font-size:14px;color:#444"><u>F</u>ormatuj komórki...</span>
<span class="t" style="left:256.500px;top:869px;font-size:14px;color:#444">Wyb<u>i</u>erz z listy rozwijanej...</span>
<span class="t" style="left:256.500px;top:903px;font-size:14px;color:#444">L<u>i</u>nk</span>
<svg style="left:458px;top:901px" width="8" height="13" viewBox="0 0 8 13"><path d="M1 1 L6.500 6.500 L1 12" stroke="#555" stroke-width="1.400" fill="none"/></svg>
<div class="abs" style="left:448px;top:898px;width:1px;height:22px;background:#e1dfdd"></div>
<svg style="left:228px;top:191px" width="16" height="22" viewBox="0 0 16 22"><path d="M4 1 L10.500 14 M12 1 L5.500 14" stroke="#555" stroke-width="1.400" fill="none"/><circle cx="4.200" cy="17" r="2.400" fill="none" stroke="#2e86c9" stroke-width="1.400"/><circle cx="11.800" cy="17" r="2.400" fill="none" stroke="#2e86c9" stroke-width="1.400"/></svg>
<svg style="left:226px;top:223.500px" width="19.500" height="20.500" viewBox="0 0 20 22"><path d="M5 15.500 H1.500 V1.500 H10 V4" stroke="#555" stroke-width="1.300" fill="none"/><path d="M6.500 5 H14 L18.500 9.500 V20.500 H6.500 Z" fill="#fff" stroke="#555" stroke-width="1.300"/><path d="M9.500 12.500 H15.500 M9.500 16 H15.500" stroke="#555" stroke-width="1.100"/></svg>
<svg style="left:228px;top:258px" width="18.4" height="20.2" viewBox="0 0 20 22"><path d="M8 20.500 H1.500 V3.500 H14.500 V8" stroke="#e8912d" stroke-width="1.500" fill="none"/><path d="M5 5.500 V2 H7 V.8 H9.500 V2 H11.500 V5.500 Z" fill="#fff" stroke="#555" stroke-width="1.200"/><rect x="10" y="9.500" width="8.500" height="11" fill="#fff" stroke="#555" stroke-width="1.300"/></svg>
<svg style="left:259px;top:297.5px" width="20.8" height="22.9" viewBox="0 0 20 22"><path d="M8 20.500 H1.500 V3.500 H14.500 V8" stroke="#e8912d" stroke-width="1.500" fill="none"/><path d="M5 5.500 V2 H7 V.8 H9.500 V2 H11.500 V5.500 Z" fill="#fff" stroke="#555" stroke-width="1.200"/><rect x="10" y="9.500" width="8.500" height="11" fill="#fff" stroke="#555" stroke-width="1.300"/></svg>
<svg style="left:226px;top:371px" width="22" height="22" viewBox="226 371 22 22"><circle cx="239.500" cy="379.300" r="5.900" fill="#fff" stroke="#2e86c9" stroke-width="1.500"/><path d="M235.200 383.800 L228.300 390.200" stroke="#2e86c9" stroke-width="1.800" stroke-linecap="round"/><path d="M239.500 378.800 V382.500" stroke="#555" stroke-width="1.500"/><circle cx="239.500" cy="376.400" r="1.100" fill="#e8912d"/></svg>
<svg style="left:226px;top:407px" width="22" height="22" viewBox="226 407 22 22"><path d="M233 426.300 H228.700 V409.200 H236.500 L240.500 413.200 V415.500" stroke="#c4c4c4" stroke-width="1.400" fill="none"/><path d="M236.500 409.200 V413.200 H240.500" stroke="#c4c4c4" stroke-width="1.100" fill="none"/><path d="M235.300 420.500 a4.600 4.600 0 0 1 8.300 -2.300 M244.600 422 a4.600 4.600 0 0 1 -8.300 2.300" stroke="#c4c4c4" stroke-width="1.500" fill="none"/><path d="M244.300 415 V418.600 H240.700 M235.600 427.300 V423.800 H239.200" stroke="#c4c4c4" stroke-width="1.300" fill="none"/></svg>
<svg style="left:225px;top:583px" width="22" height="20" viewBox="225 583 22 20"><rect x="227" y="588.300" width="18" height="13" fill="#fff" stroke="#555" stroke-width="1.400"/><path d="M227 591.300 H245" stroke="#555" stroke-width="1.100"/><path d="M230.500 598.500 V596 H241.500 V598.500 Z M233.500 596 V593.800 H238.500 V596" fill="none" stroke="#555" stroke-width="1.200"/><path d="M231.500 583.800 L227 590.300 H229.800 L228.500 594.800 L234 588 H231 L233 583.800 Z" fill="#f5a623" stroke="#e8912d" stroke-width=".6"/></svg>
<svg style="left:225px;top:722px" width="21" height="20" viewBox="225 722 21 20"><rect x="226.900" y="724" width="17.300" height="16" fill="#fff" stroke="#555" stroke-width="1.400"/><rect x="227.500" y="724.600" width="16.100" height="3.600" fill="#c9dcf0"/><path d="M226.900 728.300 H244.200 M226.900 732.200 H244.200 M226.900 736.100 H244.200 M232.700 724 V740 M238.500 724 V740" stroke="#555" stroke-width="1.100"/></svg>
<svg style="left:225px;top:759px" width="21" height="20" viewBox="225 759 21 20"><path d="M233 762 H244.100 V772 H235 L231.300 776 V772 H228.700 V767" stroke="#555" stroke-width="1.400" fill="none" stroke-linejoin="round"/><path d="M229.500 759.800 V765.200 M226.800 762.500 H232.200" stroke="#2f9e52" stroke-width="1.400"/></svg>
<svg style="left:225px;top:793px" width="21" height="20" viewBox="225 793 21 20"><path d="M233 796 H244.100 V805.500 Q243.500 810 239 810.600 H228 V801" stroke="#555" stroke-width="1.400" fill="none"/><path d="M244.100 805.500 H239.500 V810.500" stroke="#555" stroke-width="1.100" fill="none"/><path d="M229.500 794 V799.400 M226.800 796.700 H232.200" stroke="#2f9e52" stroke-width="1.400"/></svg>
<svg style="left:226px;top:829px" width="20" height="22" viewBox="226 829 20 22"><rect x="228.500" y="831.600" width="14.500" height="17.200" rx="1" fill="#fff" stroke="#555" stroke-width="1.400"/><rect x="231.800" y="835.300" width="3" height="3" fill="#777"/><rect x="231.800" y="841.300" width="3" height="3" fill="#777"/><path d="M236.800 836.800 H240 M236.800 842.800 H240" stroke="#555" stroke-width="1.300"/></svg>
<svg style="left:225px;top:899px" width="22" height="18" viewBox="225 899 22 18"><g fill="none" stroke="#555" stroke-width="1.800" stroke-linecap="round"><path d="M230.22 909.72 A6.1 4.1 0 1 1 235.38 909.72"/><path d="M241.62 906.27 A6.2 3.9 0 1 1 236.38 906.27"/></g></svg>
<!-- mini toolbar -->
<div class="abs" style="left:212px;top:99px;width:312px;height:66px;background:#fff;border:1px solid #c6c6c6;box-shadow:0 1px 5px rgba(0,0,0,.25)"></div>
<div class="box" style="left:216px;top:104px;width:75px;height:28px;border-color:#d0d0d0"></div>
<span class="t" style="left:219px;top:110px;font-size:14.500px">Calibri</span>
<svg style="left:279px;top:115px" width="9" height="6" viewBox="0 0 9 6"><path d="M1 1 L4.500 4.500 L8 1" stroke="#444" stroke-width="1.400" fill="none"/></svg>
<div class="box" style="left:290px;top:104px;width:54px;height:28px;border-color:#d0d0d0"></div>
<span class="t" style="left:294px;top:110px;font-size:14.500px">12</span>
<svg style="left:332px;top:115px" width="9" height="6" viewBox="0 0 9 6"><path d="M1 1 L4.500 4.500 L8 1" stroke="#444" stroke-width="1.400" fill="none"/></svg>
<span class="t" style="left:348px;top:106px;font-size:21px">A</span>
<svg style="left:362px;top:108px" width="7" height="5" viewBox="0 0 7 5"><path d="M.8 4 L3.500 1.200 L6.200 4" stroke="#2e86c9" stroke-width="1.400" fill="none"/></svg>
<span class="t" style="left:377px;top:110px;font-size:17px">A</span>
<svg style="left:389px;top:109px" width="7" height="5" viewBox="0 0 7 5"><path d="M.8 1 L3.500 3.800 L6.200 1" stroke="#2e86c9" stroke-width="1.400" fill="none"/></svg>
<svg style="left:400px;top:108px" width="22" height="20" viewBox="0 0 22 20"><rect x="1" y="3" width="17.500" height="10.500" fill="#fff" stroke="#555" stroke-width="1.400"/><path d="M8.500 6 a2.300 2.300 0 1 0 0 4.500 M5.800 6.200 a2.300 2.300 0 1 0 0 4.200" fill="none" stroke="#555" stroke-width="1.100"/><path d="M11.500 10.500 v6.500 a4 1.600 0 0 0 8 0 v-6.500" fill="#fde9cf" stroke="#e8912d" stroke-width="1.200"/><ellipse cx="15.500" cy="10.500" rx="4" ry="1.600" fill="#fde9cf" stroke="#e8912d" stroke-width="1.200"/><path d="M11.500 12.700 a4 1.600 0 0 0 8 0 M11.500 14.900 a4 1.600 0 0 0 8 0" fill="none" stroke="#e8912d" stroke-width="1.100"/></svg>
<svg style="left:426px;top:115px" width="9" height="6" viewBox="0 0 9 6"><path d="M1 1 L4.500 4.500 L8 1" stroke="#555" stroke-width="1.300" fill="none"/></svg>
<span class="t" style="left:444px;top:106px;font-size:22px">%</span>
<span class="t" style="left:470px;top:112px;font-size:12px;letter-spacing:-.3px;color:#666">000</span>
<svg style="left:496px;top:108px" width="20" height="20" viewBox="0 0 20 20"><rect x="1" y="1" width="18" height="18" fill="none" stroke="#a8a6a4" stroke-width="1.300"/><path d="M1 5.500 H19 M1 14.500 H19 M4 10 H16 M6.500 7.500 L4 10 L6.500 12.500 M13.500 7.500 L16 10 L13.500 12.500 M10 1 V5.500 M10 14.500 V19" stroke="#a8a6a4" stroke-width="1.200" fill="none"/></svg>
<!-- row 2 -->
<span class="t" style="left:224px;top:138px;font-size:15px;font-weight:bold">B</span>
<span class="t" style="left:252px;top:137px;font-size:17px;font-style:italic;font-family:'Liberation Serif',serif">I</span>
<svg style="left:273px;top:137px" width="18" height="18" viewBox="0 0 18 18"><path d="M1 2 H17 M4 6.500 H14 M1 11 H17 M4 15.500 H14" stroke="#555" stroke-width="1.400"/></svg>
<svg style="left:299px;top:134px" width="20" height="22" viewBox="0 0 20 22"><path d="M8 2.500 L15 9.500 L9 15.500 L3 9.500 Z" fill="#fff" stroke="#555" stroke-width="1.300" stroke-linejoin="round"/><path d="M8 2.500 L6 .8" stroke="#555" stroke-width="1.300"/><path d="M15.500 8 q2.500 2.500 1 6" stroke="#2e86c9" stroke-width="1.700" fill="none"/><rect x="0" y="17.500" width="20" height="4" fill="#f7ee22"/></svg>
<svg style="left:325px;top:143px" width="9" height="6" viewBox="0 0 9 6"><path d="M1 1 L4.500 4.500 L8 1" stroke="#555" stroke-width="1.300" fill="none"/></svg>
<span class="t" style="left:347px;top:135px;font-size:17px">A</span>
<div class="abs" style="left:344px;top:152px;width:19px;height:4px;background:#e01b24"></div>
<svg style="left:370px;top:143px" width="9" height="6" viewBox="0 0 9 6"><path d="M1 1 L4.500 4.500 L8 1" stroke="#555" stroke-width="1.300" fill="none"/></svg>
<svg style="left:388px;top:136px" width="19" height="20" viewBox="0 0 19 20"><path d="M1 1 H18 M1 1 V18 M18 1 V18" fill="none" stroke="#666" stroke-width="1.100" stroke-dasharray="1.500 1"/><path d="M9.500 1 V18 M1 9.500 H18" stroke="#555" stroke-width="1.200"/><path d="M0 18.300 H19" stroke="#444" stroke-width="1.800"/></svg>
<svg style="left:414px;top:143px" width="9" height="6" viewBox="0 0 9 6"><path d="M1 1 L4.500 4.500 L8 1" stroke="#555" stroke-width="1.300" fill="none"/></svg>
<svg style="left:430px;top:135px" width="24" height="22" viewBox="0 0 24 22"><text x="10" y="9" font-size="10" fill="#444" font-family="Liberation Sans, sans-serif">,0</text><text x="6" y="19" font-size="10" fill="#444" font-family="Liberation Sans, sans-serif">,00</text><path d="M10 5 H2 M4.800 2.200 L2 5 L4.800 7.800" stroke="#2e86c9" stroke-width="1.400" fill="none"/></svg>
<svg style="left:457px;top:135px" width="24" height="22" viewBox="0 0 24 22"><text x="6" y="9" font-size="10" fill="#444" font-family="Liberation Sans, sans-serif">,00</text><text x="12" y="19" font-size="10" fill="#444" font-family="Liberation Sans, sans-serif">,0</text><path d="M2 15 H10 M7.200 12.200 L10 15 L7.200 17.800" stroke="#2e86c9" stroke-width="1.400" fill="none"/></svg>
<svg style="left:485px;top:135px" width="21" height="20" viewBox="0 0 20 20"><path d="M1 9.500 L8 4.200 L15.200 12 L9 18.200 Z" fill="#fbd9b0" stroke="#e8912d" stroke-width="1.400" stroke-linejoin="round"/><path d="M5 13.500 L9 17.500 M8.500 10.500 L11.500 15" stroke="#e8912d" stroke-width="1"/><path d="M8.300 4 L11.300 1.800 L17.300 9.200 L15.300 11.800 Z" fill="#fff" stroke="#555" stroke-width="1.300" stroke-linejoin="round"/><path d="M14 5 L18.300 1.600" stroke="#555" stroke-width="2.600" stroke-linecap="round"/></svg>
<!-- submenu -->
<div class="abs" style="left:477px;top:680px;width:198px;height:112px;background:#fff;border:1px solid #c6c6c6;box-shadow:0 2px 6px rgba(0,0,0,.22)"></div>
<svg style="left:489px;top:687px" width="24" height="22" viewBox="489 687 24 22"><rect x="492" y="700" width="11.500" height="5.500" fill="#4a97e0"/><path d="M491.600 689.600 H509.600 V695 H491.600 M491.600 689.600 V705.600 H503.500 M491.600 695 H509.600 M491.600 699.800 H503.500 M497.600 689.600 V705.600 M503.500 689.600 V699.800" fill="none" stroke="#555" stroke-width="1.300"/><text x="503.200" y="706.800" font-size="11.500" fill="#333" font-family="Liberation Sans, sans-serif">Σ</text></svg>
<span class="t" style="left:520px;top:692px;font-size:13.700px"><u>W</u>iersz sumy</span>
<span class="t" style="left:520px;top:726px;font-size:13.700px"><u>K</u>onwertuj na zakres</span>
<div class="abs" style="left:478px;top:755px;width:194px;height:33px;background:#c8c8c8"></div>
<span class="t" style="left:520px;top:763px;font-size:13.700px;color:#333">Tekst a<u>l</u>ternatywny...</span>

<!-- red highlight frames -->
<div class="abs" style="left:209px;top:677px;width:271px;height:42px;border:4px solid #e11b22"></div>
<div class="abs" style="left:470px;top:749px;width:209px;height:48px;border:4px solid #e11b22"></div>
<!-- red arrow -->
<svg style="left:720px;top:708px" width="100" height="64" viewBox="720 708 100 64"><path d="M722.300 725.100 H767.500 V711.700 L814.800 739.900 L767.500 768.200 V754.600 H722.300 Z" fill="#ed1c24" stroke="#ed1c24" stroke-width="2" stroke-linejoin="round"/></svg>
<!-- dialog -->
<div class="abs" style="left:875px;top:489px;width:337px;height:368px;background:#f0f0f0;border:1px solid #d9d9d9;font-family:'Liberation Sans',sans-serif"></div>
<div class="abs" style="left:876px;top:490px;width:335px;height:36px;background:#fff"></div>
<span class="t" style="left:886px;top:502px;font-size:13.800px;color:#222">Tekst alternatywny</span>
<span class="t" style="left:1128px;top:501px;font-size:14px;color:#222">?</span>
<svg style="left:1180px;top:502px" width="12" height="12" viewBox="0 0 12 12"><path d="M.5 .5 L11.500 11.500 M11.500 .5 L.5 11.500" stroke="#333" stroke-width="1.200"/></svg>
<span class="t dl" style="left:885px;top:538px"><u>T</u>ytuł</span>
<div class="abs" style="left:883px;top:555px;width:324px;height:22px;background:#fff;border:1px solid #a6a6a6"></div>
<div class="abs" style="left:886px;top:558px;width:1px;height:16px;background:#222"></div>
<span class="t dl" style="left:887px;top:560px;letter-spacing:.1px;color:#222">Tabela ukazuje procentowo dostęp przedsiębiorstw w Pol</span>
<span class="t dl" style="left:885px;top:584px"><u>O</u>pis</span>
<div class="abs" style="left:883px;top:601px;width:324px;height:85px;background:#fff;border:1px solid #c0c0c0"></div>
<div class="abs dl dp" style="left:885px;top:691px;width:326px"><span style="letter-spacing:-0.028px">Tytuły i opisy są alternatywną reprezentacją tekstową</span><br><span style="letter-spacing:0.009px">informacji zawartych w tabelach. Te informacje są</span><br><span style="letter-spacing:0.081px">przydatne dla osób z wadami wzroku lub zaburzeniami</span><br><span style="letter-spacing:0.039px">poznawczymi, które mogą mieć problemy z odczytaniem</span><br><span style="letter-spacing:0.062px">lub zrozumieniem tabeli.</span></div>
<div class="abs dl dp" style="left:885px;top:788px;width:326px"><span style="letter-spacing:0.018px">Tytuł może zostać odczytany dla osoby niepełnosprawnej,</span><br><span style="letter-spacing:-0.063px">aby mogła ona określić, czy chce usłyszeć opis zawartości.</span></div>
<div class="abs" style="left:1032px;top:824px;width:81px;height:26px;background:#e1e1e1;border:2px solid #0078d7"></div>
<span class="t dl" style="left:1063px;top:831px;color:#222">OK</span>
<div class="abs" style="left:1125px;top:824px;width:82px;height:26px;background:#e1e1e1;border:1px solid #adadad"></div>
<span class="t dl" style="left:1148px;top:831px;color:#222">Anuluj</span>
</body>
</html>
